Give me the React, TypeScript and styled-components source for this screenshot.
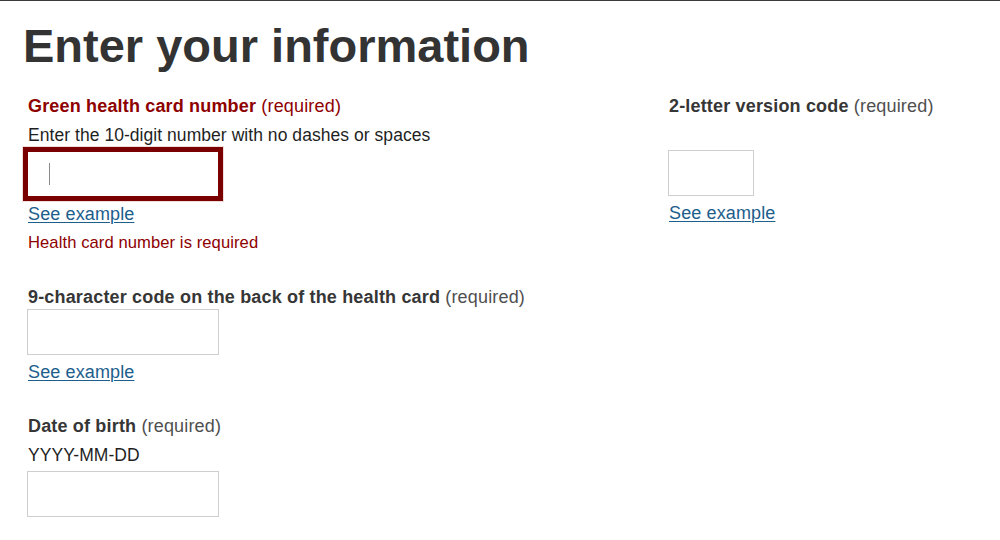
import React from "react";
import styled, { createGlobalStyle } from "styled-components";

const GlobalStyle = createGlobalStyle`
  html, body {
    margin: 0;
    padding: 0;
    background: #ffffff;
  }
  body {
    font-family: "Liberation Sans", Arial, Helvetica, sans-serif;
    color: #1a1a1a;
  }
`;

const Page = styled.main`
  border-top: 1px solid #3a3a3a;
  padding: 0 20px;
  min-height: 539px;
  box-sizing: border-box;
`;

const Title = styled.h1`
  margin: 18px 0 0 0;
  padding-left: 3px;
  font-size: 47px;
  line-height: 54px;
  font-weight: 700;
  color: #333333;
`;

const Form = styled.form`
  margin-top: 22px;
  padding-left: 7px;
  display: grid;
  grid-template-columns: 641px 1fr;
  align-items: start;
`;

const Column = styled.div`
  display: flex;
  flex-direction: column;
  align-items: flex-start;
  gap: 32px;
`;

const Field = styled.div`
  display: flex;
  flex-direction: column;
  align-items: flex-start;
`;

const Label = styled.label<{ $error?: boolean }>`
  margin-bottom: 1px;
  padding-left: 1px;
  font-size: 18px;
  line-height: 22px;
  font-weight: 700;
  letter-spacing: 0.17px;
  color: ${(p) => (p.$error ? "#8e0000" : "#363636")};
`;

const Required = styled.span<{ $error?: boolean }>`
  font-weight: 400;
  color: ${(p) => (p.$error ? "#8e0000" : "#4f4f4f")};
`;

const Hint = styled.div<{ $tight?: boolean }>`
  margin: ${(p) => (p.$tight ? "5px 0 5px" : "6px 0 5px")};
  padding-left: 1px;
  font-size: 17.5px;
  line-height: 22px;
  letter-spacing: 0.05px;
  color: #1f1f1f;
  min-height: 22px;
`;

const InputWrap = styled.div`
  position: relative;
  display: flex;
`;

const TextInput = styled.input<{ $width: number; $error?: boolean }>`
  box-sizing: border-box;
  width: ${(p) => p.$width}px;
  height: 46px;
  margin: 0;
  padding: 0 20px;
  border: 1px solid ${(p) => (p.$error ? "#7a0000" : "#cfcfcf")};
  border-radius: 0;
  background: #ffffff;
  font-family: inherit;
  font-size: 18px;
  color: #1a1a1a;
  outline: none;
  box-shadow: ${(p) =>
    p.$error ? "0 0 0 4px #7a0000, 0 0 0 5px rgba(180, 60, 60, 0.18)" : "none"};
`;

const Caret = styled.span`
  position: absolute;
  left: 22px;
  top: 12px;
  width: 1px;
  height: 22px;
  background: #8a8a8a;
  pointer-events: none;
`;

const ExampleLink = styled.a`
  margin-top: 6px;
  padding-left: 1px;
  font-size: 18px;
  line-height: 22px;
  letter-spacing: 0.12px;
  color: #1d5e8c;
  text-decoration: underline;
  text-underline-offset: 2px;
  text-decoration-thickness: 1px;
  cursor: pointer;
`;

const ErrorText = styled.div`
  margin-top: 7px;
  padding-left: 1px;
  font-size: 16.6px;
  line-height: 22px;
  letter-spacing: 0.08px;
  color: #8e0000;
`;

export default function App() {
  return (
    <>
      <GlobalStyle />
      <Page>
        <Title>Enter your information</Title>
        <Form onSubmit={(e) => e.preventDefault()}>
          <Column>
            <Field>
              <Label $error htmlFor="hcn">
                Green health card number <Required $error>(required)</Required>
              </Label>
              <Hint>Enter the 10-digit number with no dashes or spaces</Hint>
              <InputWrap>
                <TextInput id="hcn" $width={192} $error aria-invalid="true" />
                <Caret />
              </InputWrap>
              <ExampleLink href="#">See example</ExampleLink>
              <ErrorText>Health card number is required</ErrorText>
            </Field>
            <Field>
              <Label htmlFor="code9">
                9-character code on the back of the health card <Required>(required)</Required>
              </Label>
              <TextInput id="code9" $width={192} />
              <ExampleLink href="#">See example</ExampleLink>
            </Field>
            <Field>
              <Label htmlFor="dob">
                Date of birth <Required>(required)</Required>
              </Label>
              <Hint>YYYY-MM-DD</Hint>
              <TextInput id="dob" $width={192} />
            </Field>
          </Column>
          <Column>
            <Field>
              <Label htmlFor="vc">
                2-letter version code <Required>(required)</Required>
              </Label>
              <Hint $tight aria-hidden="true">{"\u00a0"}</Hint>
              <TextInput id="vc" $width={86} />
              <ExampleLink href="#">See example</ExampleLink>
            </Field>
          </Column>
        </Form>
      </Page>
    </>
  );
}
